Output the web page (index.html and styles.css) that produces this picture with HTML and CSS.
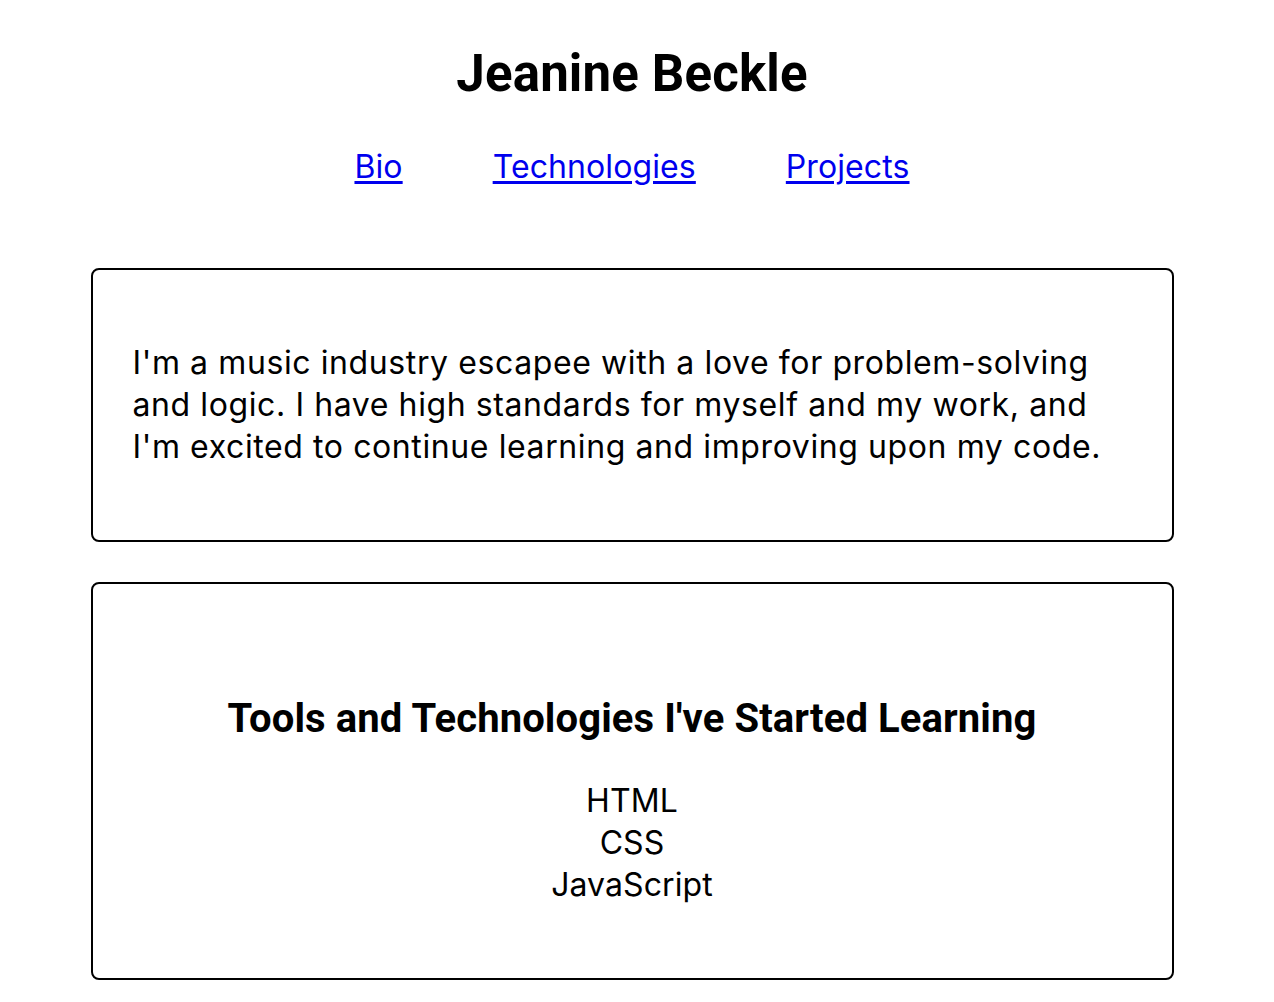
FILE: index.html
```html
<!DOCTYPE html>
<html lang="en">
<head>
<meta charset="utf-8">
<title>Jeanine Beckle</title>
<link rel="stylesheet" href="styles.css">
</head>
<body>
<div class="page">
  <header class="site-header">
    <h1 class="name">Jeanine Beckle</h1>
    <nav class="nav">
      <a href="#bio">Bio</a>
      <a href="#tech">Technologies</a>
      <a href="#projects">Projects</a>
    </nav>
  </header>
  <main class="content">
    <section class="card bio" id="bio">
      <p>I'm a music industry escapee with a love for problem-solving and logic. I have high standards for myself and my work, and I'm excited to continue learning and improving upon my code.</p>
    </section>
    <section class="card tech" id="tech">
      <h2>Tools and Technologies I've Started Learning</h2>
      <ul class="tech-list">
        <li>HTML</li>
        <li>CSS</li>
        <li>JavaScript</li>
      </ul>
    </section>
  </main>
</div>
</body>
</html>
```
FILE: styles.css
```css
html, body {
  margin: 0;
  padding: 0;
  background: #fff;
}
body {
  font-family: Inter, "Noto Sans", sans-serif;
  color: #000;
}
.page {
  width: 1264px;
}
.site-header {
  display: flex;
  flex-direction: column;
  align-items: center;
  padding-top: 44px;
}
.name {
  font-family: Roboto, sans-serif;
  font-weight: 700;
  font-size: 51px;
  line-height: 60px;
  margin: 0;
  letter-spacing: 0.15px;
}
.nav {
  display: flex;
  gap: 90px;
  margin-top: 42px;
}
.nav a {
  color: #0000ee;
  font-size: 32px;
  line-height: 42px;
  letter-spacing: 0.1px;
  text-underline-offset: 3px;
}
.content {
  display: flex;
  flex-direction: column;
  align-items: center;
  gap: 40px;
  margin-top: 80px;
}
.card {
  width: 1083px;
  box-sizing: border-box;
  border: 2px solid #000;
  border-radius: 8px;
}
.bio {
  padding: 72px 60px 72px 40px;
}
.bio p {
  margin: 0;
  font-size: 32px;
  line-height: 42px;
  letter-spacing: 0.6px;
}
.tech {
  padding: 111px 40px 72px;
  text-align: center;
}
.tech h2 {
  font-family: Roboto, sans-serif;
  font-size: 40px;
  line-height: 48px;
  margin: 0 0 37px;
  font-weight: 700;
  letter-spacing: 0.1px;
}
.tech-list {
  list-style: none;
  margin: 0;
  padding: 0;
  font-size: 32px;
  line-height: 42px;
  letter-spacing: 0.1px;
}
```
